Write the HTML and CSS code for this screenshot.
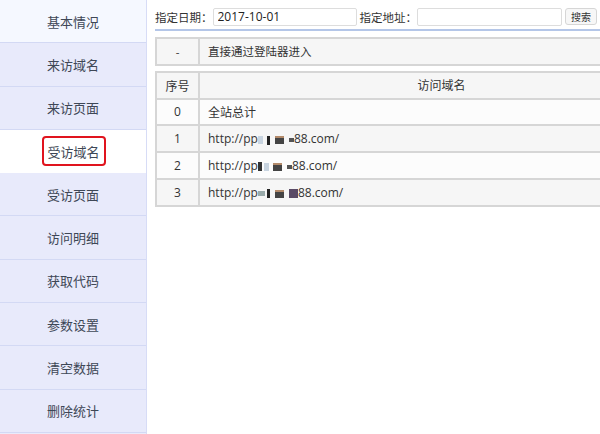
FILE: index.html
```html
<!DOCTYPE html>
<html lang="zh">
<head>
<meta charset="utf-8">
<title>受访域名</title>
<link rel="stylesheet" href="styles.css">
</head>
<body>
<div class="page">
  <nav class="sidebar">
    <div class="item first">基本情况</div>
    <div class="item">来访域名</div>
    <div class="item">来访页面</div>
    <div class="item active"><span class="box">受访域名</span></div>
    <div class="item">受访页面</div>
    <div class="item">访问明细</div>
    <div class="item">获取代码</div>
    <div class="item">参数设置</div>
    <div class="item">清空数据</div>
    <div class="item">删除统计</div>
  </nav>
  <main class="main">
    <form class="filter">
      <label class="lbl">指定日期：</label>
      <input class="inp date" type="text" value="2017-10-01">
      <label class="lbl addr">指定地址：</label>
      <input class="inp url" type="text" value="">
      <button class="btn" type="button">搜索</button>
    </form>
    <table class="tbl direct">
      <tr class="alt"><td class="num">-</td><td>直接通过登陆器进入</td></tr>
    </table>
    <table class="tbl list">
      <tr class="alt head"><td class="num">序号</td><td class="center">访问域名</td></tr>
      <tr><td class="num">0</td><td>全站总计</td></tr>
      <tr class="alt"><td class="num">1</td><td>http://pp<span class="mz m1"></span><span class="mz m2"></span><span class="mz m3"></span><span class="mz m4"></span>88.com/</td></tr>
      <tr><td class="num">2</td><td>http://pp<span class="mz m5"></span><span class="mz m1"></span><span class="mz m3"></span><span class="mz m4"></span>88.com/</td></tr>
      <tr class="alt"><td class="num">3</td><td>http://pp<span class="mz m6"></span><span class="mz m2"></span><span class="mz m3"></span><span class="mz m7"></span>88.com/</td></tr>
    </table>
  </main>
</div>
</body>
</html>
```
FILE: styles.css
```css
html, body {
  margin: 0;
  padding: 0;
  background: #ffffff;
  overflow: hidden;
}
body {
  width: 600px;
  height: 434px;
  font-family: "DejaVu Sans", "Noto Sans CJK SC", sans-serif;
  color: #333333;
}
.page {
  display: flex;
  height: 434px;
}
.sidebar {
  width: 146px;
  flex: none;
  border-right: 1px solid #d7dcf6;
  background: #e9ebfb;
  display: flex;
  flex-direction: column;
}
.item {
  height: 42.3px;
  border-bottom: 1px solid #d3d9f4;
  display: flex;
  align-items: center;
  justify-content: center;
  font-family: "Noto Sans CJK SC", sans-serif;
  font-size: 13px;
  color: #3e4756;
  background: #e8eafb;
}
.item.first {
  background: #f5f8ff;
}
.item.active {
  background: #ffffff;
  border-bottom-color: #ffffff;
}
.box {
  display: inline-flex;
  align-items: center;
  justify-content: center;
  width: 60px;
  height: 26px;
  border: 2px solid #e0141e;
  border-radius: 4px;
  margin-left: 1px;
}
.main {
  flex: 1;
  min-width: 0;
  overflow: hidden;
  padding: 7px 0 0 8px;
}
.filter {
  display: flex;
  align-items: center;
  height: 19px;
  margin: 0;
  padding-bottom: 3px;
  border-bottom: 2px solid #b4c6e8;
}
.lbl {
  font-family: "Noto Sans CJK SC", sans-serif;
  font-size: 11.5px;
  color: #333;
  white-space: nowrap;
}
.lbl.addr {
  margin-left: 3px;
}
.inp {
  box-sizing: border-box;
  height: 18px;
  border: 1px solid #dddddd;
  border-radius: 2px;
  padding: 0 4px;
  font-family: "Open Sans", "DejaVu Sans", sans-serif;
  font-size: 12px;
  color: #222;
  background: #fff;
  outline: none;
}
.inp.date {
  width: 144px;
}
.inp.url {
  width: 145px;
}
.btn {
  margin-left: 3px;
  height: 17px;
  width: 32px;
  padding: 0;
  border: 1px solid #d6d6d6;
  border-radius: 3px;
  background: #f7f7f7;
  font-family: "Noto Sans CJK SC", sans-serif;
  font-size: 10px;
  color: #333;
}
.tbl {
  border-collapse: collapse;
  width: 530px;
  font-family: "Noto Sans CJK SC", sans-serif;
  font-size: 11.5px;
  color: #333;
}
.tbl td {
  border: 2px solid #d6d6d6;
  height: 25px;
  box-sizing: border-box;
  padding: 0 8px;
  background: #fcfcfc;
  white-space: nowrap;
}
.tbl tr {
  height: 26.8px;
}
.tbl tr.alt td {
  background: #f6f6f6;
}
.tbl td.num {
  width: 43px;
  text-align: center;
  padding: 0;
  font-family: "Open Sans", "DejaVu Sans", sans-serif;
}
.tbl td.center {
  text-align: center;
}
.tbl .head td.num {
  font-family: "Noto Sans CJK SC", sans-serif;
}
.direct {
  margin-top: 6px;
}
.list {
  margin-top: 5px;
}
.list td {
  font-family: "Open Sans", "Noto Sans CJK SC", sans-serif;
  font-size: 12px;
}
.mz {
  display: inline-block;
  vertical-align: middle;
  height: 8px;
}
.m1 { width: 5px; background: #c8d4e0; margin-right: 4px; }
.m2 { width: 3px; background: #222; height: 9px; margin-right: 5px; }
.m3 { width: 9px; background: linear-gradient(#b38a6a 30%, #444 30%); margin-right: 5px; }
.m4 { width: 5px; background: #555; height: 4px; }
.m5 { width: 4px; background: #333; height: 9px; margin-right: 2px; }
.m6 { width: 7px; background: #9aa; height: 5px; margin-right: 2px; }
.m7 { width: 9px; background: #5a4a66; height: 9px; }
```
